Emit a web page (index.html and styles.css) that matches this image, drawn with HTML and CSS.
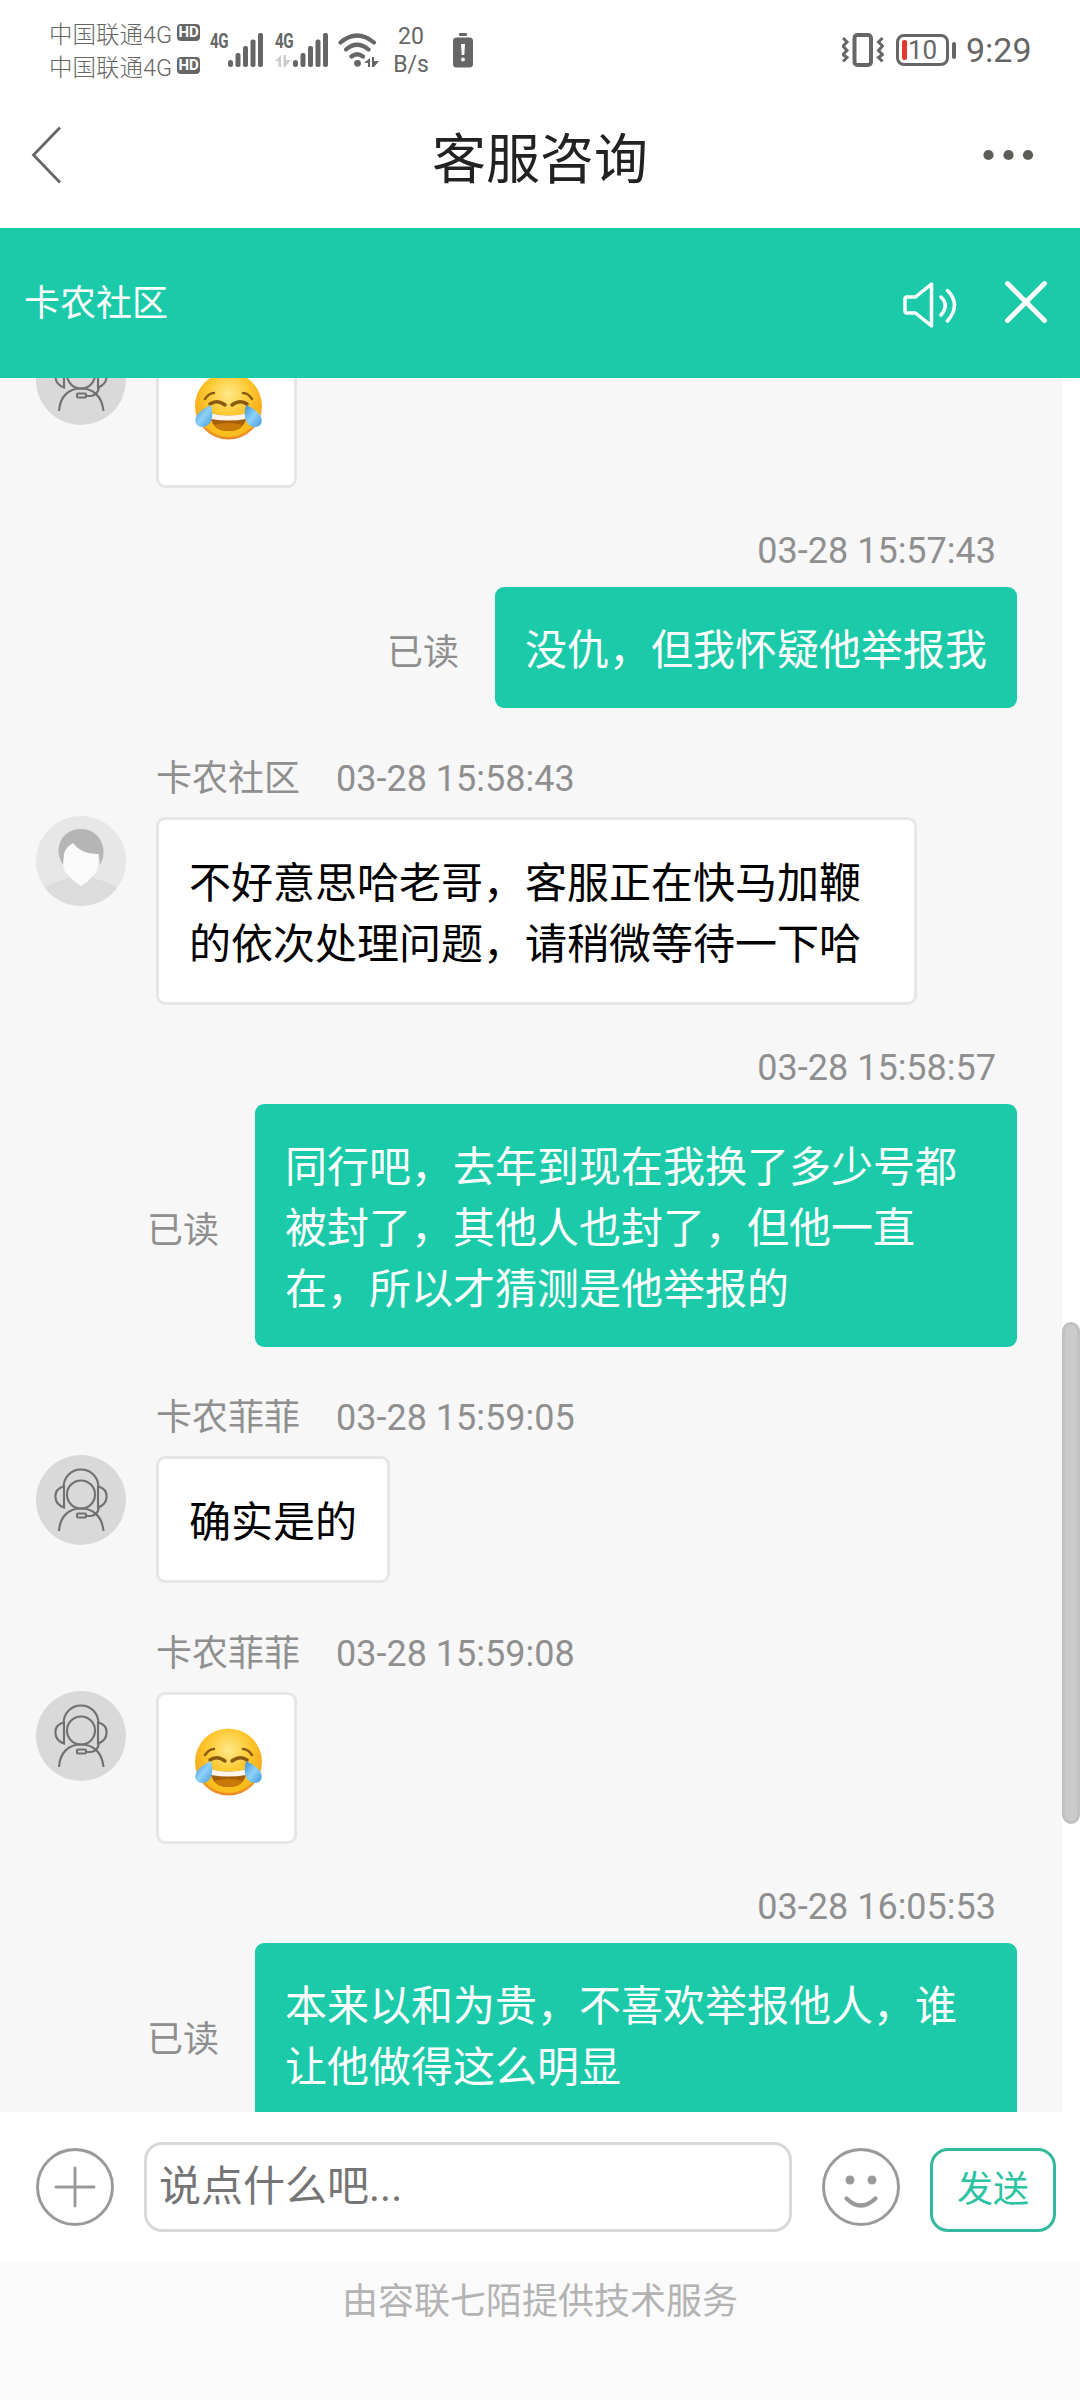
FILE: index.html
```html
<!DOCTYPE html>
<html lang="zh-CN">
<head>
<meta charset="utf-8">
<title>客服咨询</title>
<link rel="stylesheet" href="styles.css">
</head>
<body>
<svg class="defs" width="0" height="0" aria-hidden="true">
  <defs>
    <radialGradient id="face" cx=".5" cy=".32" r=".68">
      <stop offset="0" stop-color="#ffe88a"/><stop offset=".5" stop-color="#fdc62b"/><stop offset=".82" stop-color="#f7a81c"/><stop offset="1" stop-color="#e8842a"/>
    </radialGradient>
    <linearGradient id="lower" x1="0" y1="0" x2="0" y2="1">
      <stop offset=".5" stop-color="#ffd21c" stop-opacity="0"/><stop offset="1" stop-color="#ffd21c" stop-opacity=".7"/>
    </linearGradient>
    <linearGradient id="tear" x1="0" y1="0" x2="1" y2="1">
      <stop offset="0" stop-color="#3a8fd6"/><stop offset=".5" stop-color="#8fd2f8"/><stop offset="1" stop-color="#4199e0"/>
    </linearGradient>
    <symbol id="joy" viewBox="0 0 72 72">
      <circle cx="35.500" cy="36" r="33.500" fill="url(#face)"/>
      <circle cx="35.500" cy="36" r="31" fill="url(#lower)"/>
      <g fill="none" stroke="#8a5a10" stroke-width="2.500" stroke-linecap="round">
        <path d="M12 29q4-6 9-6M59 29q-4-6-9-6"/>
        <path d="M17 34q7-5 15 1M39 35q8-6 15-1" stroke-width="3.500"/>
      </g>
      <path d="M17 43q18.500 5 37 0q-1 18-18.500 18T17 43z" fill="#a65f08"/>
      <path d="M17 43q18.500 5 37 0l-1 6q-17.500 3-35 0z" fill="#fff5ea"/>
      <path d="M21 55q14-4 29 0q-4 6-14.500 6T21 55z" fill="#c87909"/>
      <path d="M18 35q3 12-1 18q-5 6-12 3q-5-4-1-11q5-6 14-10z" fill="url(#tear)"/>
      <path d="M53 35q-3 12 1 18q5 6 12 3q5-4 1-11q-5-6-14-10z" fill="url(#tear)"/>
    </symbol>
    <symbol id="agent" viewBox="0 0 90 90">
      <circle cx="45" cy="45" r="45" fill="#d9d9d9"/>
      <g fill="none" stroke="#707070" stroke-width="2.100">
        <circle cx="45" cy="39.500" r="14"/>
        <path d="M27.500 32C28 22 35 14.500 45 14.500S62 22 62.500 32"/>
        <path d="M28 31.500c-12 3-11 17 0 21zM62 31.500c12 3 11 17 0 21z"/>
        <path d="M23 76C24 61 33 53.500 45 53.500S66 61 67.500 76"/>
        <path d="M63 52q-1 8-8 9h-5"/>
        <rect x="41" y="58.500" width="9" height="4" rx="1"/>
      </g>
    </symbol>
    <symbol id="bars" viewBox="0 0 36 34">
      <g fill="#666"><rect x="0" y="27" width="5" height="7" rx="2.500"/><rect x="7.500" y="20" width="5" height="14" rx="2"/><rect x="15" y="13" width="5" height="21" rx="2"/><rect x="22.500" y="6.500" width="5" height="27.500" rx="2"/><rect x="30" y="0" width="5" height="34" rx="2"/></g>
    </symbol>
  </defs>
</svg>

<header class="status">
  <div class="carriers">
    <div class="carrier">中国联通4G<span class="hd">HD</span></div>
    <div class="carrier">中国联通4G<span class="hd">HD</span></div>
  </div>
  <div class="signal">
    <span class="net">4G</span>
    <svg width="36" height="34"><use href="#bars"/></svg>
  </div>
  <div class="signal">
    <div class="net-col">
      <span class="net">4G</span>
      <svg width="16" height="12" viewBox="0 0 16 12" fill="#ccc"><path d="M6 0v12H3.500V6H0zM8.500 0H11v5h5l-6 7H8.500z"/></svg>
    </div>
    <svg width="36" height="34"><use href="#bars"/></svg>
  </div>
  <svg class="wifi" width="42" height="34" viewBox="0 0 42 34">
    <g fill="none" stroke="#666" stroke-width="4.200" stroke-linecap="round"><path d="M2.500 9.500Q19 -4.500 36 9.500M8 16.500Q19 7 30.500 16.500M13.500 23.500Q19 19 25 23.500"/></g>
    <circle cx="19.500" cy="30.300" r="3.400" fill="#666"/>
    <path fill="#666" d="M32 25v9h-2v-4h-4zM34 24h2v4h5l-5 6h-2z"/>
  </svg>
  <div class="speed"><span>20</span><span>B/s</span></div>
  <svg class="low" width="20" height="35" viewBox="0 0 20 35"><rect x="6" y="0" width="8" height="3" rx="1" fill="#666"/><rect x="0" y="4.500" width="20" height="30" rx="3.500" fill="#666"/><path d="M8 11h4l-.7 11H8.700z" fill="#fff"/><circle cx="10" cy="26.500" r="1.900" fill="#fff"/></svg>
  <div class="status-right">
    <svg width="42" height="34" viewBox="0 0 42 34" fill="none" stroke="#666"><rect x="12.500" y="2" width="16.500" height="30" rx="3" stroke-width="4"/><path d="M1 5l4 4-4 4 4 4.500-4 4 4 3-4 4M40.500 5l-4 4 4 4-4 4.500 4 4-4 3 4 4" stroke-width="3"/></svg>
    <div class="battery"><i class="charge"></i>10</div>
    <i class="tip"></i>
    <span class="clock">9:29</span>
  </div>
</header>

<nav class="nav">
  <svg width="52" height="58" viewBox="0 0 52 58"><path d="M29 1.500L2.500 29 29 56.500" fill="none" stroke="#666" stroke-width="2.800"/></svg>
  <h1 class="nav-title">客服咨询</h1>
  <svg width="52" height="12" viewBox="0 0 52 12" fill="#5c5c59"><circle cx="6.500" cy="6" r="5.100"/><circle cx="26.500" cy="6" r="5.100"/><circle cx="46" cy="6" r="5.100"/></svg>
</nav>

<section class="brand">
  <span class="brand-name">卡农社区</span>
  <svg class="speaker" width="56" height="50" viewBox="0 0 56 50" fill="none" stroke="#fff" stroke-width="3.500" stroke-linejoin="round" stroke-linecap="round"><path d="M5 17h8.500L29.500 4v42L13.500 33H5q-2 0-2-2V19q0-2 2-2z"/><path d="M39 17q8.500 8 0 18M45.500 10.500q14 14 0 30.500"/></svg>
  <svg width="44" height="44" viewBox="0 0 44 44" fill="none" stroke="#fff" stroke-width="4.800" stroke-linecap="round"><path d="M3.500 3.500l37 37M40.500 3.500l-37 37"/></svg>
</section>

<main class="chat">
  <div class="messages">
    <article class="msg in">
      <div class="row"><svg class="avatar"><use href="#agent"/></svg><div class="bubble pic"><svg class="emoji"><use href="#joy"/></svg></div></div>
    </article>
    <article class="msg out">
      <div class="meta"><time>03-28 15:57:43</time></div>
      <div class="row"><span class="read">已读</span><div class="bubble">没仇，但我怀疑他举报我</div></div>
    </article>
    <article class="msg in">
      <div class="meta"><span>卡农社区</span><time>03-28 15:58:43</time></div>
      <div class="row">
        <svg class="avatar" viewBox="0 0 90 90">
          <clipPath id="round"><circle cx="45" cy="45" r="45"/></clipPath>
          <g clip-path="url(#round)"><path fill="#e7e7e7" d="M0 0h90v90H0z"/><path fill="#dcdcdc" d="M8 72q6-5 22-9l6-4h18l6 4q16 4 22 9v20H8z"/></g>
          <path fill="#fbfafa" d="M27 30l10-6 25 12v13q0 7-6 12-5 6-11 9-6-3-11-9-7-5-7-13z"/>
          <path fill="#b5b5b5" d="M27 49q-5-8-4.500-16C24 20 33 13 45 13s21 8 22.500 21q.5 8-3.500 15l-1-11q-17 1-26-11-8 5-9 11z"/>
        </svg>
        <div class="bubble">不好意思哈老哥，客服正在快马加鞭的依次处理问题，请稍微等待一下哈</div>
      </div>
    </article>
    <article class="msg out">
      <div class="meta"><time>03-28 15:58:57</time></div>
      <div class="row"><span class="read">已读</span><div class="bubble">同行吧，去年到现在我换了多少号都被封了，其他人也封了，但他一直在，所以才猜测是他举报的</div></div>
    </article>
    <article class="msg in">
      <div class="meta"><span>卡农菲菲</span><time>03-28 15:59:05</time></div>
      <div class="row"><svg class="avatar"><use href="#agent"/></svg><div class="bubble">确实是的</div></div>
    </article>
    <article class="msg in">
      <div class="meta"><span>卡农菲菲</span><time>03-28 15:59:08</time></div>
      <div class="row"><svg class="avatar"><use href="#agent"/></svg><div class="bubble pic"><svg class="emoji"><use href="#joy"/></svg></div></div>
    </article>
    <article class="msg out">
      <div class="meta"><time>03-28 16:05:53</time></div>
      <div class="row"><span class="read">已读</span><div class="bubble">本来以和为贵，不喜欢举报他人，谁让他做得这么明显</div></div>
    </article>
  </div>
  <div class="track"><div class="thumb"></div></div>
</main>

<section class="composer">
  <svg width="78" height="78" viewBox="0 0 78 78" fill="none" stroke="#999" stroke-width="2.900"><circle cx="39" cy="39" r="37.500"/><path d="M39 20v38M20 39h38" stroke-linecap="round"/></svg>
  <div class="input">说点什么吧...</div>
  <svg width="78" height="78" viewBox="0 0 78 78" fill="none" stroke="#999" stroke-width="2.900"><circle cx="39" cy="39" r="37.500"/><circle cx="28" cy="32" r="4.500" fill="#999" stroke="none"/><circle cx="50" cy="32" r="4.500" fill="#999" stroke="none"/><path d="M24.500 50.500q14 14 29 0" stroke-width="4.200" stroke-linecap="round"/></svg>
  <div class="send">发送</div>
</section>
<footer class="credit">由容联七陌提供技术服务</footer>
</body>
</html>
```
FILE: styles.css
```css
* { box-sizing: border-box; }
body {
  margin: 0;
  width: 1080px;
  height: 2400px;
  display: flex;
  flex-direction: column;
  overflow: hidden;
  background: #fff;
  font-family: Roboto, "Noto Sans CJK SC", sans-serif;
  font-size: 36px;
}
svg { display: block; flex: none; }
.defs { position: absolute; }

/* status bar */
.status {
  height: 100px;
  flex: none;
  display: flex;
  align-items: center;
  padding: 0 49px;
  color: #666;
}
.carriers { width: 161px; padding-bottom: 2px; }
.carrier {
  display: flex;
  align-items: center;
  height: 33px;
  font-size: 23.5px;
  font-weight: 300;
  white-space: nowrap;
}
.hd {
  width: 23px;
  height: 17px;
  margin-left: 5px;
  border-radius: 4px;
  background: #666;
  color: #fff;
  font-size: 15px;
  font-weight: 700;
  line-height: 17px;
  text-align: center;
}
.signal { display: flex; height: 34px; width: 65px; }
.net { width: 18px; font: 700 21px/16px Roboto, sans-serif; letter-spacing: -.5px; transform: scaleX(.72); transform-origin: left; }
.net-col { display: flex; flex-direction: column; justify-content: space-between; width: 18px; }
.net, .net-col { flex: none; }
.wifi { margin-left: -2px; }
.speed { width: 46px; margin-left: 8px; padding-top: 1px; display: flex; flex-direction: column; text-align: center; font-size: 23px; line-height: 28px; }
.low { margin-left: 19px; }
.status-right { margin-left: auto; display: flex; align-items: center; }
.battery { display: flex; align-items: center; width: 53px; height: 32px; margin-left: 12px; padding-left: 3px; border: 3px solid #666; border-radius: 8px; font-size: 26px; line-height: 26px; }
.charge { width: 5px; height: 20px; margin-right: 1px; border-radius: 2px; background: #e5392f; }
.tip { width: 4px; height: 17px; margin-left: 3px; border-radius: 2px; background: #666; }
.clock { margin-left: 10px; font-size: 34px; line-height: 40px; width: 65px; }

/* page title */
.nav { height: 128px; flex: none; display: flex; align-items: center; justify-content: space-between; padding: 0 46px 18px 31px; }
.nav-title { margin: 0; padding: 12px 0 0 15px; color: #222; font-size: 54px; font-weight: 400; line-height: 70px; }

.brand { height: 150px; flex: none; display: flex; align-items: center; padding: 0 32px 2px 24px; background: #1bcaa8; color: #fff; }
.brand-name { flex: 1; padding-bottom: 5px; }
.speaker { margin: 6px 46px 0 0; }

/* conversation */
.chat { height: 1734px; flex: none; display: flex; overflow: hidden; }
.messages { width: 1062px; background: #f7f7f7; }
.msg { display: flex; flex-direction: column; }
.msg.in { margin-top: 44px; padding-left: 36px; }
.msg.out { margin-top: 36px; padding-right: 45px; }
.msg:first-child { margin-top: -42px; }
.meta { display: flex; gap: 36px; margin-bottom: 11px; color: #8f8f8f; line-height: 54px; }
.in .meta { padding-left: 120px; }
.out .meta { justify-content: flex-end; margin-bottom: 9px; padding-right: 21px; }
.row { display: flex; }
.out .row { justify-content: flex-end; align-items: center; gap: 36px; }
.read { color: #8f8f8f; padding-top: 11px; line-height: 48px; }
.avatar { width: 90px; height: 90px; margin: -1px 30px 0 0; }
.bubble { max-width: 762px; padding: 33px 30px 27px; border-radius: 9px; font-size: 42px; line-height: 61px; }
.in .bubble { max-width: 761px; border: 3px solid #e6e6e6; background: #fff; color: #000; }
.out .bubble { background: #1bcaa8; color: #fff; }
.pic { height: 152px; }
.emoji { width: 72px; height: 72px; margin: -2px -1px 0 4px; }
.track { width: 18px; padding-top: 944px; background: #fff; }
.thumb { height: 502px; border: 3px solid #c1c1c1; border-radius: 9px; background: #cbcbcb; }

/* composer */
.composer { height: 150px; flex: none; display: flex; align-items: center; padding: 0 24px 0 36px; }
.input { width: 648px; height: 90px; margin: 0 30px; padding: 3px 12px; border: 3px solid #d9d9d9; border-radius: 18px; color: #757575; font-size: 42px; line-height: 78px; }
.send { width: 126px; height: 84px; margin: 6px 0 0 30px; border: 3px solid #35b99c; border-radius: 18px; color: #2bc3a2; line-height: 79px; text-align: center; }
.credit { flex: 1; padding-top: 13px; background: #fafafa; color: #b3b3b3; line-height: 54px; text-align: center; }
```
